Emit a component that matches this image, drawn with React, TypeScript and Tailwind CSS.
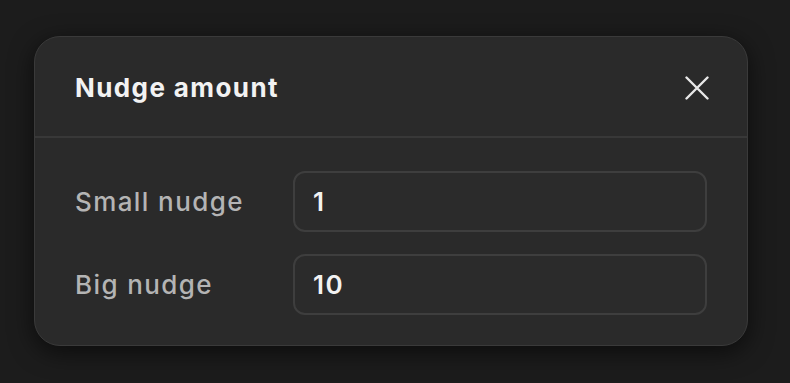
import React from "react";

const fields = [
  { label: "Small nudge", value: "1" },
  { label: "Big nudge", value: "10" },
];

const App: React.FC = () => {
  return (
    <div
      className="w-[790px] h-[383px] bg-[#1c1c1c] pt-[36px] pl-[34px]"
      style={{ fontFamily: "Inter, 'Noto Sans', sans-serif" }}
    >
      <div className="w-[714px] h-[310px] rounded-[26px] bg-[#2a2a2a] border border-[#3a3a3a] shadow-[0_6px_24px_rgba(0,0,0,0.6)] flex flex-col overflow-hidden">
        <div className="h-[101px] pt-[2px] flex items-center justify-between pl-[40px] pr-[38px] border-b-2 border-[#383838]">
          <h2 className="text-[26px] font-bold text-[#f2f2f2] tracking-[1.4px]">Nudge amount</h2>
          <button type="button" className="text-[#e8e8e8]">
            <svg width="24" height="24" viewBox="0 0 24 24" fill="none" stroke="currentColor" strokeWidth="2.4" strokeLinecap="round">
              <path d="M1.5 1.5L22.5 22.5M22.5 1.5L1.5 22.5" />
            </svg>
          </button>
        </div>
        <div className="flex flex-col gap-[22px] pt-[33px] pl-[40px] pr-[40px]">
          {fields.map((f) => (
            <div key={f.label} className="flex items-center">
              <label className="w-[218px] text-[26px] font-medium text-[#b4b4b4] tracking-[1.4px]">{f.label}</label>
              <div className="flex-1 h-[61px] rounded-[12px] border-2 border-[#3e3e3e] bg-[#2b2b2b] flex items-center px-[18px] text-[26px] font-semibold text-[#f2f2f2] tracking-[1.5px]">
                {f.value}
              </div>
            </div>
          ))}
        </div>
      </div>
    </div>
  );
};

export default App;
